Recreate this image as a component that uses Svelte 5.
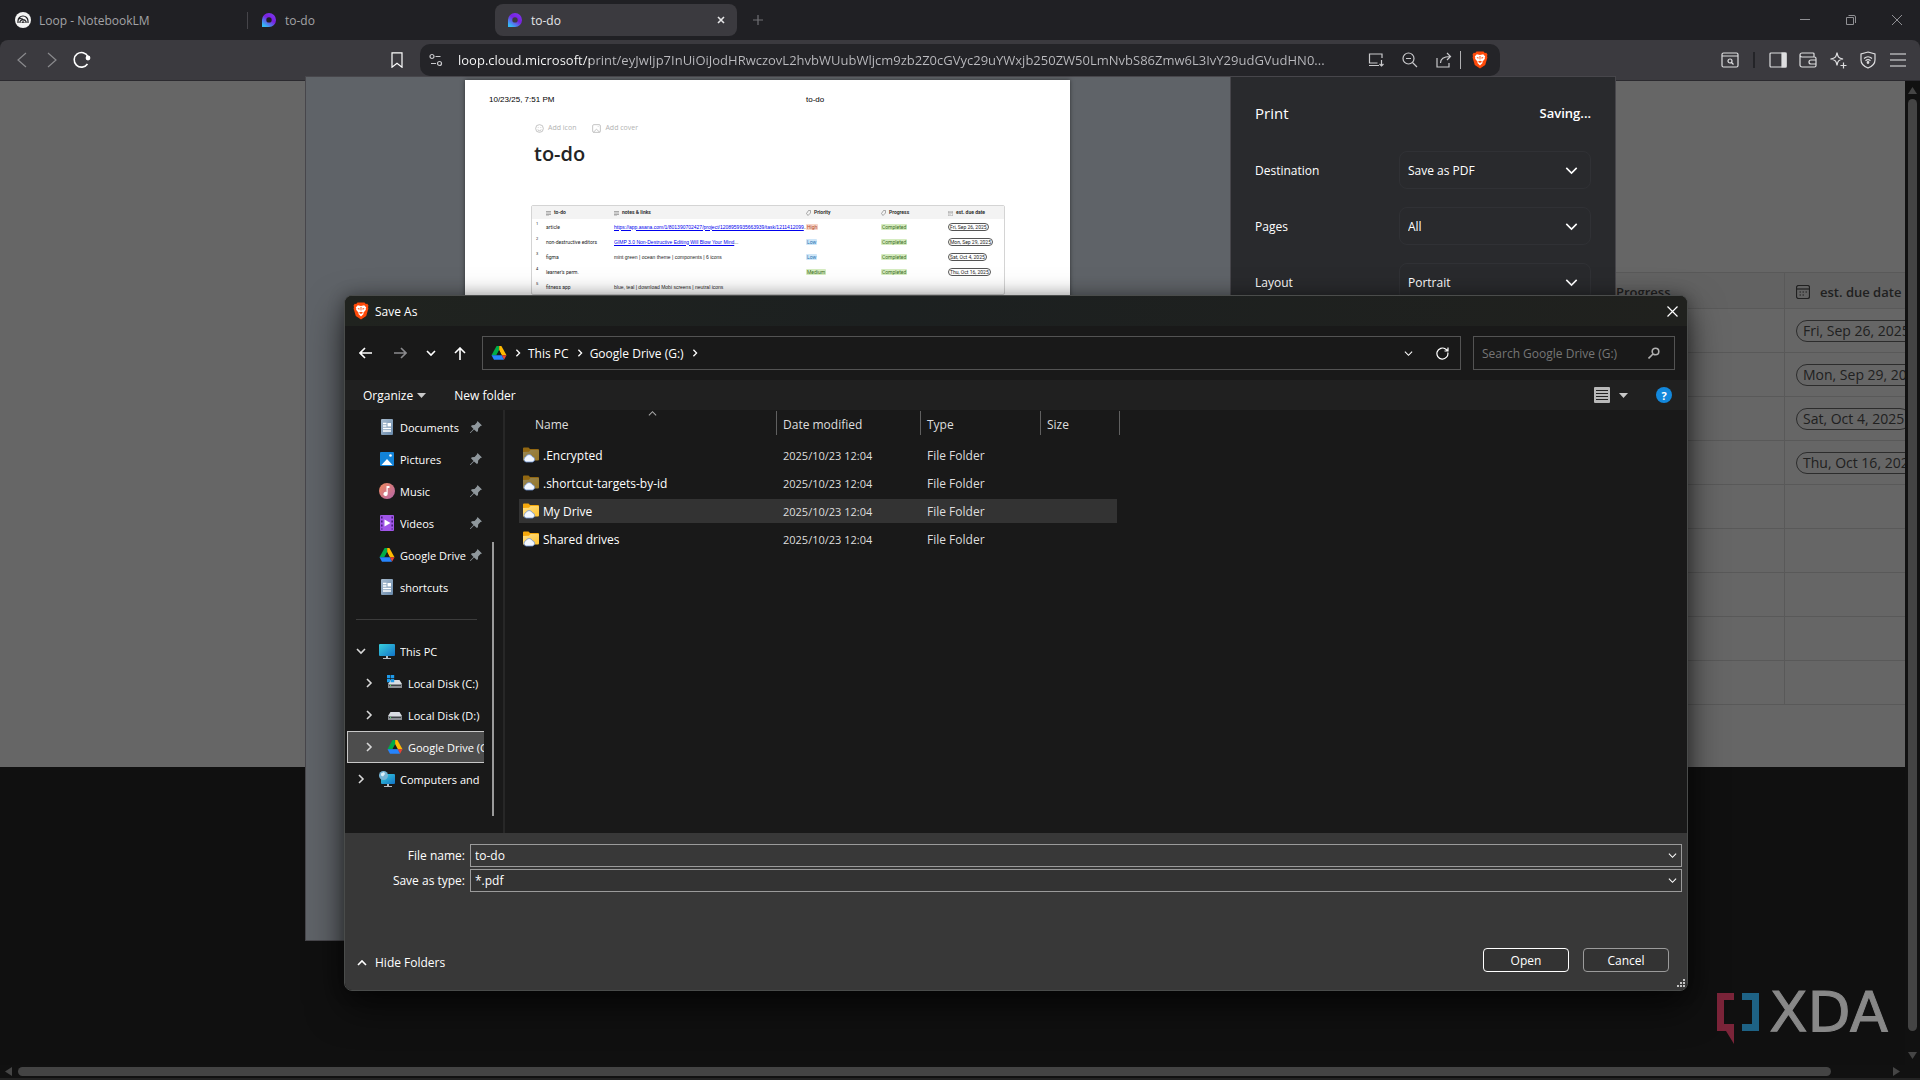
<script lang="ts">
  const host = 'loop.cloud.microsoft';
  const path =
    '/print/eyJwIjp7InUiOiJodHRwczovL2hvbWUubWljcm9zb2Z0cGVyc29uYWxjb250ZW50LmNvbS86Zmw6L3IvY29udGVudHN0...';

  let fileName = $state('to-do');
  let search = $state('');

  const settings = [
    { id: 'destination', label: 'Destination', value: 'Save as PDF' },
    { id: 'pages', label: 'Pages', value: 'All' },
    { id: 'layout', label: 'Layout', value: 'Portrait' }
  ];

  const dueDates = ['Fri, Sep 26, 2025', 'Mon, Sep 29, 2025', 'Sat, Oct 4, 2025', 'Thu, Oct 16, 2025', '', '', '', '', ''];

  const tasks = [
    {
      name: 'article',
      link: 'https://app.asana.com/1/801390702427/project/1208959935663939/task/1211412099',
      priority: 'High',
      progress: 'Completed',
      due: 'Fri, Sep 26, 2025'
    },
    {
      name: 'non-destructive editors',
      link: 'GIMP 3.0 Non-Destructive Editing Will Blow Your Mind',
      priority: 'Low',
      progress: 'Completed',
      due: 'Mon, Sep 29, 2025'
    },
    {
      name: 'figma',
      note: 'mint green | ocean theme | components | 6 icons',
      priority: 'Low',
      progress: 'Completed',
      due: 'Sat, Oct 4, 2025'
    },
    { name: "learner's perm.", priority: 'Medium', progress: 'Completed', due: 'Thu, Oct 16, 2025' },
    { name: 'fitness app', note: 'blue, teal | download Mobi screens | neutral icons' }
  ];

  const quickAccess = [
    { name: 'Documents', icon: 'document', pinned: true },
    { name: 'Pictures', icon: 'pictures', pinned: true },
    { name: 'Music', icon: 'music', pinned: true },
    { name: 'Videos', icon: 'videos', pinned: true },
    { name: 'Google Drive', icon: 'drive', pinned: true },
    { name: 'shortcuts', icon: 'document', pinned: false }
  ];

  const devices = [
    { name: 'This PC', icon: 'pc', open: true },
    { name: 'Local Disk (C:)', icon: 'diskWin', nested: true },
    { name: 'Local Disk (D:)', icon: 'disk', nested: true },
    { name: 'Google Drive (G:)', icon: 'drive', nested: true, selected: true },
    { name: 'Computers and', icon: 'network' }
  ];

  const files = [
    { name: '.Encrypted', hidden: true },
    { name: '.shortcut-targets-by-id', hidden: true },
    { name: 'My Drive', active: true },
    { name: 'Shared drives' }
  ];
</script>

{#snippet chevron(dir: string, size: number)}
  <svg class="line" width={size} height={size} viewBox="0 0 10 10">
    {#if dir === 'down'}
      <path d="M1 3l4 4 4-4" />
    {:else if dir === 'up'}
      <path d="M1 7l4-4 4 4" />
    {:else}
      <path d="M3 1l4 4-4 4" />
    {/if}
  </svg>
{/snippet}

{#snippet brave()}
  <svg width="16" height="18" viewBox="0 0 16 18">
    <path fill="#ff4a0a" d="M4.5.5h7l1.3 1.4 1.5-.2 1.2 2-.5 1.4.4 1.3-2.2 7.6L8 17.6l-5.2-3.6L.6 6.4 1 5.1.5 3.7l1.2-2 1.5.2z" />
    <path fill="#fff" d="M8 4l3.2-.7 2 2.3-.5 1.2.2.9-2.5 3 .1 1.2L8 14.4 5.5 11.9l.1-1.2-2.5-3 .2-.9-.5-1.2 2-2.3z" />
    <path fill="#ff4a0a" d="M4.5 6l2.2.5-.6 1.6zM11.5 6l-2.2.5.6 1.6zM7.5 5h1l-.1 3.6h-.8zM5.8 10.7L8 9.8l2.2.9L8 12z" />
  </svg>
{/snippet}

{#snippet loopLogo()}
  <svg width="14" height="14" viewBox="0 0 14 14">
    <path fill="url(#loop)" fill-rule="evenodd" d="M0 14V7a7 7 0 1 1 7 7zM7 4.2A2.7 2.7 0 1 0 7 9.6 2.7 2.7 0 0 0 7 4.2z" />
  </svg>
{/snippet}

{#snippet icon(name: string)}
  <svg class="ico" width="16" height="16" viewBox="0 0 16 16">
    {#if name === 'document'}
      <rect x="2" y="0" width="12" height="16" rx="1" fill="url(#doc)" />
      <path stroke="#fff" stroke-width="1.3" d="M4 4.5h3.5M4 7h3.5M4 9.5h8M4 12h8" />
      <rect x="8.5" y="4" width="3.5" height="3.5" fill="#fff" />
    {:else if name === 'pictures'}
      <rect x="1" y="1" width="14" height="14" rx="1" fill="#1283d8" />
      <path fill="#fff" d="M2.5 14L8 8l5.5 6z" />
      <circle cx="11.5" cy="4.5" r="1.3" fill="#fff" />
    {:else if name === 'music'}
      <circle cx="8" cy="8" r="8" fill="url(#music)" />
      <path fill="#fff" d="M7.5 3h3v2H8.700v6a2.100 2 0 1 1-1.200-1.900z" />
    {:else if name === 'videos'}
      <rect x="1" y="0" width="14" height="16" rx="1" fill="#a055e8" />
      <path stroke="#46207c" stroke-width="1.6" stroke-dasharray="2 2" d="M2.8 1.5v13M13.2 1.5v13" />
      <path fill="#fff" d="M5.500 4.500l6 3.500-6 3.500z" />
    {:else if name === 'drive'}
      <path fill="#00ac47" d="M5.6 1h2.600v4L5.300 10.200H.5z" />
      <path fill="#ffba00" d="M8.2 1h2.200l5.100 9.200h-4.800L8.200 5z" />
      <path fill="#ea4335" d="M10.700 10.200h4.800L13 14.800z" />
      <path fill="#2684fc" d="M.5 10.200h10.200l2.300 4.600H3z" />
      <path fill="#191919" d="M8.100 5.600l2.500 4.400h-5z" />
    {:else if name === 'pc'}
      <rect x="0" y="1" width="16" height="12" rx="1" fill="url(#screen)" />
      <path fill="#b8bec4" d="M7 13h2v2h3v1H4v-1h3z" />
    {:else if name === 'network'}
      <rect x="2" y="3" width="14" height="10" rx="1" fill="url(#screen)" />
      <path fill="#b8bec4" d="M8 13h2v2h3v1H5v-1h3z" />
      <circle cx="4.5" cy="4.5" r="4.5" fill="#76b5d6" />
      <path fill="#d9eef8" d="M2 2.500l3-1.500 1 2-2 2.500-2-1z" />
    {:else}
      <path fill="#d9dde2" d="M3.500 5h9L15 9H1z" />
      <rect x="1" y="9" width="14" height="4" rx=".5" fill="#8b8f94" />
      <path stroke="#3f4347" d="M2 10.500h12" />
      <rect x="3" y="10" width="1" height="1" fill="#4be05d" />
      {#if name === 'diskWin'}
        <path fill="#1e9bea" d="M0 0h3.300v3.300H0zM3.900 0h3.300v3.300H3.900zM0 3.900h3.300v3.300H0zM3.900 3.900h3.300v3.300H3.900z" />
      {/if}
    {/if}
  </svg>
{/snippet}

{#snippet tag()}
  <svg class="thin" width="5" height="6" viewBox="0 0 10 12"><path d="M1 7l4-6h4v5l-5 5z" /></svg>
{/snippet}

{#snippet lines()}
  <svg class="thin" width="5" height="5" viewBox="0 0 10 10"><path d="M0 1h10M0 4h10M0 7h10M0 10h6" /></svg>
{/snippet}

{#snippet calendar(size: number)}
  <svg class="thin" width={size} height={size} viewBox="0 0 14 14">
    <rect x=".5" y=".5" width="13" height="13" rx="2" />
    <path d="M1 4h12" />
    <path stroke-dasharray="1.5 1.5" d="M3.500 7h8M3.500 10h5" />
  </svg>
{/snippet}

<svg class="defs" width="0" height="0" aria-hidden="true">
  <defs>
    <linearGradient id="loop" x1="1" y1="0" x2="0.3" y2="1">
      <stop offset="0" stop-color="#7a3ff0" />
      <stop offset=".5" stop-color="#7a1fe0" />
      <stop offset="1" stop-color="#35b8f5" />
    </linearGradient>
    <linearGradient id="doc" x1="0" y1="0" x2="1" y2="1">
      <stop offset="0" stop-color="#a9bccf" />
      <stop offset="1" stop-color="#6889aa" />
    </linearGradient>
    <linearGradient id="music" x1="0" y1="0" x2="1" y2="1">
      <stop offset="0" stop-color="#f08a5c" />
      <stop offset="1" stop-color="#b364a8" />
    </linearGradient>
    <linearGradient id="screen" x1="0" y1="0" x2="1" y2="1">
      <stop offset="0" stop-color="#38d0dc" />
      <stop offset="1" stop-color="#1273c8" />
    </linearGradient>
    <linearGradient id="folder" x1="0" y1="0" x2="1" y2="1">
      <stop offset="0" stop-color="#ffe08a" />
      <stop offset="1" stop-color="#ffc32e" />
    </linearGradient>
  </defs>
</svg>

<div class="browser">
  <header class="tabs">
    <button class="tab first">
      <svg width="16" height="16" viewBox="0 0 16 16">
        <circle cx="8" cy="8" r="8" fill="#f4f4f4" />
        <path fill="none" stroke="#202024" stroke-width="1.2" d="M3 11V9a5 5 0 0 1 10 0v2M5 11V9.500a3.300 3.300 0 0 1 6 0V11M7.200 11v-.8a1 1 0 0 1 1.700 0v.8M3.500 7A4.500 4.500 0 0 1 9 8.500" />
      </svg>
      <span>Loop - NotebookLM</span>
    </button>
    <button class="tab">{@render loopLogo()}<span>to-do</span></button>
    <button class="tab active">
      {@render loopLogo()}<span>to-do</span>
      <svg class="line bold" width="8" height="8" viewBox="0 0 8 8"><path d="M1 1l6 6M7 1L1 7" /></svg>
    </button>
    <button class="new-tab" aria-label="New tab">
      <svg class="line" width="10" height="10" viewBox="0 0 10 10"><path d="M5 0v10M0 5h10" /></svg>
    </button>
    <div class="window-buttons">
      <button aria-label="Minimize"><svg class="line" width="10" height="10" viewBox="0 0 10 10"><path d="M0 4.500h10" /></svg></button>
      <button aria-label="Restore">
        <svg class="line" width="10" height="10" viewBox="0 0 10 10"><path d="M.5 2.500h7v7h-7zM2.500.5H8A1.500 1.500 0 0 1 9.500 2v6" /></svg>
      </button>
      <button aria-label="Close"><svg class="line" width="10" height="10" viewBox="0 0 10 10"><path d="M0 0l10 10M10 0L0 10" /></svg></button>
    </div>
  </header>

  <div class="toolbar">
    <div class="nav">
      <button class="dim" aria-label="Back"><svg class="line" width="10" height="16" viewBox="0 0 10 16"><path d="M9 1L1 8l8 7" /></svg></button>
      <button class="dim" aria-label="Forward"><svg class="line" width="10" height="16" viewBox="0 0 10 16"><path d="M1 1l8 7-8 7" /></svg></button>
      <button aria-label="Reload">
        <svg class="line bold" width="18" height="18" viewBox="0 0 18 18"><path d="M14.500 13A7.300 7.300 0 1 1 15 5.500" /><circle cx="15" cy="7" r="1.6" fill="currentColor" /></svg>
      </button>
      <button class="bookmark" aria-label="Bookmark">
        <svg class="line" width="12" height="16" viewBox="0 0 12 16"><path d="M1 .8h10v14.400l-5-4-5 4z" /></svg>
      </button>
    </div>
    <div class="omnibox">
      <svg class="line" width="14" height="14" viewBox="0 0 14 14"><circle cx="3" cy="3.5" r="2" /><path d="M6.500 3.500h5M2 10.500h5" /><circle cx="10.5" cy="10.5" r="2" /></svg>
      <input class="url" aria-label="Address" value={host + path} readonly />
      <svg class="line" width="16" height="14" viewBox="0 0 16 14"><path d="M14 5V1H1.500v9h8M1 12.500h10M13.500 7v6M11.500 11l2 2 2-2" /></svg>
      <svg class="line" width="16" height="16" viewBox="0 0 16 16"><circle cx="6.5" cy="6.5" r="5.5" /><path d="M10.500 10.500L15 15M4 6.500h5" /></svg>
      <svg class="line" width="16" height="16" viewBox="0 0 16 16"><path d="M1 6v9h12v-4M4.500 11c0-4 3-6.500 9.500-6.500M11 1l3.500 3.500L11 8" /></svg>
      <div class="brave-button">{@render brave()}</div>
    </div>
    <div class="extras">
      <svg class="line" width="18" height="16" viewBox="0 0 18 16"><rect x="1" y="1" width="16" height="14" rx="1.5" /><path d="M1 4h16M10.500 10.500l2 2" /><circle cx="9" cy="9" r="2" /></svg>
      <i></i>
      <svg class="line" width="18" height="16" viewBox="0 0 18 16"><rect x="1" y="1" width="16" height="14" rx="1" /><path fill="currentColor" d="M13 1h4v14h-4z" /></svg>
      <svg class="line" width="18" height="16" viewBox="0 0 18 16"><path d="M15 5V2a1 1 0 0 0-1-1H3a2 2 0 0 0 0 4h12.500A1.500 1.500 0 0 1 17 6.500v7a1.500 1.500 0 0 1-1.500 1.500H3a2 2 0 0 1-2-2V3M17 8h-5a2 2 0 0 0 0 4h5" /></svg>
      <svg class="line" width="18" height="18" viewBox="0 0 18 18"><path d="M8 1.500c.8 4.500 1.500 5.500 6 6.500-4.500 1-5.200 2-6 6.500C7.200 10 6.500 9 1.500 8 6.500 7 7.200 6 8 1.500zM14.500 11.500v6M11.500 14.500h6" /></svg>
      <svg class="line" width="18" height="18" viewBox="0 0 18 18"><path d="M9 1l7 2v6c0 4-3 6.500-7 8-4-1.500-7-4-7-8V3zM5 7.500q4-3.500 8 0M6.500 9.700q2.500-2 5 0" /><circle cx="9" cy="11.5" r=".8" fill="currentColor" /></svg>
      <svg class="line bold menu" width="18" height="14" viewBox="0 0 18 14"><path d="M1 1h16M1 7h16M1 13h16" /></svg>
    </div>
  </div>

  <main>
    <div class="content">
      <div class="page">
        <table class="page-table">
          <thead>
            <tr><th class="progress">Progress</th><th><span class="due-head">{@render calendar(14)}est. due date</span></th></tr>
          </thead>
          <tbody>
            {#each dueDates as due}
              <tr><td></td><td>{#if due}<span class="due">{due}</span>{/if}</td></tr>
            {/each}
          </tbody>
        </table>
      </div>
      <div class="watermark">
        <svg width="44" height="54" viewBox="0 0 44 54">
          <path fill="#7b2439" d="M1 1h17v7H8v24h10v20l-8-13H1z" />
          <path fill="#1e6285" d="M26 1h17v38H26v-7h10V8H26z" />
        </svg>
        <span>XDA</span>
      </div>
    </div>
    <div class="scroll-y"><svg width="9" height="7" viewBox="0 0 9 7"><path d="M4.500 0L9 7H0z" /></svg><i></i><svg width="9" height="7" viewBox="0 0 9 7"><path d="M4.500 7L9 0H0z" /></svg></div>
  </main>
  <div class="scroll-x"><svg width="7" height="9" viewBox="0 0 7 9"><path d="M0 4.500L7 0v9z" /></svg><i></i><svg width="7" height="9" viewBox="0 0 7 9"><path d="M7 4.500L0 0v9z" /></svg></div>

  <section class="print-dialog" aria-label="Print">
    <div class="preview">
      <article class="paper">
        <div class="stamp"><span>10/23/25, 7:51 PM</span><span>to-do</span></div>
        <div class="paper-actions">
          <span><svg class="thin" width="9" height="9" viewBox="0 0 14 14"><circle cx="7" cy="7" r="6" /><path d="M5 5v1M9 5v1M4 9q3 3 6 0" /></svg>Add icon</span>
          <span><svg class="thin" width="9" height="9" viewBox="0 0 14 14"><rect x="1" y="1" width="12" height="12" rx="2" /><path d="M2 13l5-5 5 5M9 4h1" /></svg>Add cover</span>
        </div>
        <h1>to-do</h1>
        <div class="tasks-frame">
          <table class="tasks">
            <colgroup><col class="c-num" /><col class="c-name" /><col class="c-note" /><col class="c-pri" /><col class="c-prog" /><col /></colgroup>
            <thead>
              <tr>
                <th></th>
                <th>{@render lines()}to-do</th>
                <th>{@render lines()}notes &amp; links</th>
                <th>{@render tag()}Priority</th>
                <th>{@render tag()}Progress</th>
                <th>{@render calendar(5)}est. due date</th>
              </tr>
            </thead>
            <tbody>
              {#each tasks as task, i}
                <tr>
                  <td class="num">{i + 1}</td>
                  <td>{task.name}</td>
                  <td class="note">{#if task.link}<a href="#task">{task.link}</a>...{:else}{task.note ?? ''}{/if}</td>
                  <td>{#if task.priority}<span class="chip {task.priority.toLowerCase()}">{task.priority}</span>{/if}</td>
                  <td>{#if task.progress}<span class="chip done">{task.progress}</span>{/if}</td>
                  <td>{#if task.due}<span class="date">{task.due}</span>{/if}</td>
                </tr>
              {/each}
            </tbody>
          </table>
        </div>
      </article>
    </div>
    <div class="settings">
      <div class="settings-head"><h2>Print</h2><strong>Saving...</strong></div>
      {#each settings as item}
        <div class="setting">
          <label for={item.id}>{item.label}</label>
          <div class="select">
            <select id={item.id}><option>{item.value}</option></select>
            {@render chevron('down', 13)}
          </div>
        </div>
      {/each}
    </div>
  </section>

  <section class="save-dialog" aria-label="Save As">
    <div class="title">
      {@render brave()}<span>Save As</span>
      <button aria-label="Close dialog"><svg class="line" width="11" height="11" viewBox="0 0 11 11"><path d="M.5.5l10 10M10.500.5l-10 10" /></svg></button>
    </div>

    <div class="location">
      <button aria-label="Back"><svg class="line bold" width="13" height="12" viewBox="0 0 13 12"><path d="M13 6H1M6 1L1 6l5 5" /></svg></button>
      <button class="dim" aria-label="Forward"><svg class="line bold" width="13" height="12" viewBox="0 0 13 12"><path d="M0 6h12M7 1l5 5-5 5" /></svg></button>
      <button class="narrow bold" aria-label="Recent locations">{@render chevron('down', 10)}</button>
      <button class="up" aria-label="Up"><svg class="line bold" width="12" height="13" viewBox="0 0 12 13"><path d="M6 13V1M1 6l5-5 5 5" /></svg></button>
      <div class="address">
        {@render icon('drive')}
        <span class="sep bold">{@render chevron('right', 8)}</span>
        <button>This PC</button>
        <span class="sep bold">{@render chevron('right', 8)}</span>
        <button>Google Drive (G:)</button>
        <span class="sep bold">{@render chevron('right', 8)}</span>
        <button class="push" aria-label="Previous locations">{@render chevron('down', 9)}</button>
        <button class="refresh" aria-label="Refresh">
          <svg class="line" width="13" height="13" viewBox="0 0 13 13"><path d="M11.800 5.500A5.500 5.500 0 1 1 9.500 2L11.500 3.500M12 .5v3.500H8.500" /></svg>
        </button>
      </div>
      <div class="search">
        <input aria-label="Search" placeholder="Search Google Drive (G:)" bind:value={search} />
        <svg class="line bold" width="12" height="12" viewBox="0 0 12 12"><circle cx="7.5" cy="4.5" r="3.3" /><path d="M5 7l-4.500 4.500" /></svg>
      </div>
    </div>

    <div class="commands">
      <button>Organize <svg width="9" height="5" viewBox="0 0 9 5"><path fill="#c8c8c8" d="M0 0h9L4.500 5z" /></svg></button>
      <button>New folder</button>
      <button class="view" aria-label="View">
        <svg width="16" height="16" viewBox="0 0 16 16"><rect width="16" height="16" rx="1" fill="#b9b9b9" /><path stroke="#222" d="M2 3.500h12M2 6.500h12M2 9.500h12M2 12.500h12" /></svg>
        <svg width="9" height="5" viewBox="0 0 9 5"><path fill="#c8c8c8" d="M0 0h9L4.500 5z" /></svg>
      </button>
      <button class="help" aria-label="Help">?</button>
    </div>

    <div class="body">
      <nav class="tree">
        <ul>
          {#each quickAccess as item}
            <li>
              <span class="twist"></span>{@render icon(item.icon)}<span class="label">{item.name}</span>
              {#if item.pinned}
                <svg class="pin" width="12" height="12" viewBox="0 0 12 12"><path fill="#8f979c" d="M7.500 0L12 4.500l-1.500.6-2.300 2.400-.3 2.700-1 .8L4 8.500.5 12H0v-.5L3.500 8 1 5.200l.8-1 2.800-.3L6.900 1.500z" /></svg>
              {/if}
            </li>
          {/each}
          <li class="rule"></li>
          {#each devices as item}
            <li class:nested={item.nested} class:selected={item.selected}>
              <span class="twist bold">{@render chevron(item.open ? 'down' : 'right', 10)}</span>{@render icon(item.icon)}<span class="label">{item.name}</span>
            </li>
          {/each}
        </ul>
        <div class="tree-scroll"></div>
      </nav>

      <div class="list">
        <table class="files">
          <colgroup><col class="f-name" /><col class="f-date" /><col class="f-type" /><col class="f-size" /></colgroup>
          <thead>
            <tr>
              <th>Name<span class="sort">{@render chevron('up', 9)}</span></th>
              <th>Date modified</th>
              <th>Type</th>
              <th>Size</th>
            </tr>
          </thead>
          <tbody>
            {#each files as file}
              <tr class:active={file.active}>
                <td>
                  <div class="file">
                    <svg width="16" height="16" viewBox="0 0 16 16">
                      <g opacity={file.hidden ? 0.55 : 1}>
                        <path fill="#f5a80c" d="M0 1.500A1 1 0 0 1 1 .5h4.500L7 2h8a1 1 0 0 1 1 1v4H0z" />
                        <path fill="url(#folder)" d="M0 5l6-.2L7.500 3H15a1 1 0 0 1 1 1v8.500a1 1 0 0 1-1 1H0z" />
                      </g>
                      <path fill="#f3f8ff" stroke="#6e92cf" stroke-width=".8" d="M3 15a2.800 2.800 0 0 1-.2-5.300 3.600 3.600 0 0 1 6.600 0A2.700 2.700 0 0 1 9.500 15z" />
                    </svg>
                    <span>{file.name}</span>
                  </div>
                </td>
                <td class="when">2025/10/23 12:04</td>
                <td>File Folder</td>
                <td></td>
              </tr>
            {/each}
          </tbody>
        </table>
      </div>
    </div>

    <footer>
      <div class="field">
        <label for="file-name">File name:</label>
        <div class="combo"><input id="file-name" bind:value={fileName} />{@render chevron('down', 9)}</div>
      </div>
      <div class="field">
        <label for="file-type">Save as type:</label>
        <div class="combo dark"><select id="file-type"><option>*.pdf</option></select>{@render chevron('down', 9)}</div>
      </div>
      <div class="actions">
        <button class="hide bold">{@render chevron('up', 10)}Hide Folders</button>
        <button class="push primary">Open</button>
        <button class="secondary">Cancel</button>
      </div>
      <svg class="grip" width="8" height="8" viewBox="0 0 8 8"><path fill="#c4c4c4" d="M6 0h2v2H6zM3 3h2v2H3zM6 3h2v2H6zM0 6h2v2H0zM3 6h2v2H3zM6 6h2v2H6z" /></svg>
    </footer>
  </section>
</div>

<style>
  :global(body) {
    margin: 0;
    background: #101010;
  }

  .browser {
    position: relative;
    display: flex;
    flex-direction: column;
    height: 100vh;
    overflow: hidden;
    background: #202024;
    color: #fff;
    font-family: 'Open Sans', 'Noto Sans', sans-serif;
    font-size: 12px;
  }

  .browser * {
    box-sizing: border-box;
  }

  .defs {
    position: absolute;
  }

  button,
  input,
  select {
    margin: 0;
    padding: 0;
    border: 0;
    background: none;
    color: inherit;
    font: inherit;
    outline: 0;
  }

  select {
    appearance: none;
  }

  svg {
    display: block;
    flex: none;
  }

  .line,
  .thin {
    fill: none;
    stroke: currentColor;
    stroke-width: 1.2;
  }

  .bold,
  .bold .line {
    stroke-width: 1.6;
  }

  .push {
    margin-left: auto;
  }

  /* Tab strip */
  .tabs {
    display: flex;
    align-items: center;
    height: 40px;
    flex: none;
    color: #a3a3a6;
  }

  .tab {
    display: flex;
    align-items: center;
    gap: 9px;
    width: 247px;
    height: 32px;
    padding: 0 14px;
    text-align: left;
  }

  .tab.first {
    width: 248px;
    gap: 8px;
    padding-left: 15px;
    background: linear-gradient(#46454a, #46454a) right center / 1px 17px no-repeat;
  }

  .tab.active {
    width: 242px;
    padding: 0 12px 0 13px;
    border-radius: 8px;
    background: #3b3a3f;
    color: #e6e6e8;
  }

  .tab.active span {
    flex: 1;
  }

  .new-tab {
    display: flex;
    margin-left: 16px;
    color: #707074;
  }

  .window-buttons {
    display: flex;
    margin-left: auto;
    color: #909094;
  }

  .window-buttons button {
    display: flex;
    justify-content: center;
    width: 46px;
  }

  .window-buttons .line {
    stroke-width: 1;
  }

  /* Toolbar */
  .toolbar {
    display: grid;
    grid-template-columns: 420px 1fr 420px;
    align-items: center;
    height: 41px;
    flex: none;
    padding-bottom: 1px;
    border-bottom: 1px solid #2b2a2f;
    border-radius: 8px 8px 0 0;
    background: #3b3a3f;
  }

  .nav {
    display: flex;
    align-items: center;
    padding: 0 8px 0 7px;
  }

  .nav button {
    display: flex;
    justify-content: center;
    width: 30px;
  }

  .nav .bookmark {
    margin-left: auto;
  }

  .dim {
    color: #8a8a8d;
  }

  .omnibox {
    display: flex;
    align-items: center;
    gap: 18px;
    height: 32px;
    padding: 0 12px 0 9px;
    border-radius: 10px;
    background: #242428;
    color: #c9c9cc;
  }

  /* The host reads brighter than the rest of the address */
  .url {
    flex: 1;
    min-width: 0;
    margin-left: -3px;
    background: linear-gradient(90deg, #fff 132px, #bcbcc0 132px);
    background-clip: text;
    color: transparent;
    font-size: 13px;
  }

  .brave-button {
    margin-left: -10px;
    padding-left: 11px;
    border-left: 1px solid #b0b0b2;
  }

  .extras {
    display: flex;
    align-items: center;
    justify-content: flex-end;
    gap: 12px;
    padding-right: 13px;
    color: #dedee0;
  }

  .extras i {
    width: 2px;
    height: 16px;
    margin: 0 2px;
    background: #242428;
  }

  .extras .menu {
    color: #b0b0b2;
  }

  /* Dimmed page behind the dialogs */
  main {
    display: flex;
    flex: 1;
    min-height: 0;
  }

  .content {
    display: flex;
    flex: 1;
    min-width: 0;
    flex-direction: column;
    align-items: flex-end;
    overflow: hidden;
    background: #101010;
  }

  .page {
    display: flex;
    flex: none;
    justify-content: flex-end;
    width: 100%;
    height: 686px;
    padding-top: 191px;
    background: #666;
    color: #202020;
    font-size: 13px;
  }

  .page-table {
    width: 330px;
    height: 100px;
    border-collapse: collapse;
    table-layout: fixed;
    white-space: nowrap;
  }

  .page-table th,
  .page-table td {
    height: 44px;
    padding: 0 11px;
    overflow: hidden;
    border: 1px solid #595959;
    text-align: left;
  }

  .page-table th {
    height: 36px;
    padding-top: 2px;
    background: #626262;
    font-weight: 600;
  }

  .page-table .progress {
    width: 209px;
    padding-left: 40px;
  }

  .page-table td:last-child,
  .page-table th:last-child {
    padding-right: 0;
    border-right: 0;
  }

  .due-head {
    display: flex;
    align-items: center;
    gap: 10px;
  }

  .due {
    display: inline-block;
    padding: 0 6px;
    border: 1px solid #2c2c2c;
    border-radius: 11px;
    line-height: 20px;
    font-size: 14px;
  }

  .watermark {
    display: flex;
    align-items: flex-start;
    gap: 9px;
    height: 73px;
    margin-top: auto;
    margin-right: 17px;
    color: #888;
    font: 400 56px/40px 'DejaVu Sans', sans-serif;
    -webkit-text-stroke: 1px #888;
  }

  .scroll-y,
  .scroll-x {
    display: flex;
    flex: none;
    align-items: center;
    background: #111;
    fill: #454545;
  }

  .scroll-y {
    flex-direction: column;
    width: 15px;
    padding: 6px 0;
    gap: 5px;
  }

  .scroll-y i {
    flex: 1;
    width: 9px;
    margin-bottom: 16px;
    border-radius: 5px;
    background: #444;
  }

  .scroll-x {
    height: 15px;
    padding: 0 20px 0 5px;
    gap: 6px;
    border-bottom: 2px solid #232323;
  }

  .scroll-x i {
    flex: 1;
    height: 9px;
    margin-right: 56px;
    border-radius: 5px;
    background: #444;
  }

  /* Print dialog */
  .print-dialog {
    position: absolute;
    top: 76px;
    right: 304px;
    bottom: 139px;
    left: 305px;
    display: flex;
    border: 1px solid #47464b;
    background: #5f6368;
  }

  .preview {
    display: flex;
    flex: 1;
    justify-content: center;
    padding: 3px 1px 0 0;
  }

  .paper {
    width: 605px;
    padding: 16px 24px;
    background: #fff;
    box-shadow: 0 0 4px rgba(0, 0, 0, 0.5);
    color: #242424;
  }

  .stamp {
    display: grid;
    grid-template-columns: 317px 1fr;
    color: #000;
    font: 8px/8px 'Liberation Sans', Arial, sans-serif;
  }

  .paper-actions {
    display: flex;
    gap: 16px;
    margin: 18px 0 0 46px;
    color: #b3b3b3;
    font-size: 7px;
    line-height: 12px;
  }

  .paper-actions span {
    display: flex;
    align-items: center;
    gap: 4px;
  }

  h1 {
    margin: 6px 0 37px 45px;
    font-size: 20px;
    font-weight: 600;
    line-height: 28px;
  }

  .tasks-frame {
    width: 474px;
    margin-left: 42px;
    border: 1px solid #d4d4d4;
    border-radius: 2px;
  }

  .tasks {
    width: 100%;
    border-collapse: collapse;
    table-layout: fixed;
    font-family: Roboto, sans-serif;
    font-size: 5px;
    line-height: 6px;
    white-space: nowrap;
  }

  .tasks th {
    height: 13px;
    padding: 0;
    background: #f3f3f3;
    font-weight: 600;
    text-align: left;
  }

  .tasks th svg {
    display: inline-block;
    margin-right: 3px;
    color: #777;
    vertical-align: middle;
  }

  .tasks td {
    height: 15px;
    padding: 0;
  }

  .tasks td.num {
    padding: 0 0 5px 4px;
    font-size: 4px;
  }

  .tasks .note {
    font-family: 'Liberation Sans', Arial, sans-serif;
  }

  .tasks a {
    color: #0000ee;
  }

  .c-num {
    width: 14px;
  }

  .c-name {
    width: 68px;
  }

  .c-note {
    width: 192px;
  }

  .c-pri {
    width: 75px;
  }

  .c-prog {
    width: 67px;
  }

  .chip {
    padding: 0 1px;
    border-radius: 1px;
  }

  .chip.high {
    background: #f7d5c8;
    color: #b0452a;
  }

  .chip.low {
    background: #cfe6f8;
    color: #2272b0;
  }

  .chip.medium,
  .chip.done {
    background: #d5ecc0;
    color: #3d6e22;
  }

  .date {
    padding: 0 1px;
    border: 1px solid #555;
    border-radius: 4px;
  }

  .settings {
    width: 385px;
    padding: 16px 24px;
    border-left: 1px solid #47464b;
    background: #292a2d;
    font-size: 12px;
  }

  .settings-head {
    display: flex;
    align-items: center;
    justify-content: space-between;
    height: 40px;
    margin-bottom: 18px;
  }

  h2 {
    margin: 0;
    font-size: 15px;
    font-weight: 400;
  }

  .settings-head strong {
    font-weight: 600;
    font-size: 13px;
  }

  .setting {
    display: flex;
    align-items: center;
    justify-content: space-between;
    height: 38px;
    margin-bottom: 18px;
  }

  .select {
    display: flex;
    align-items: center;
    width: 192px;
    height: 38px;
    border: 1px solid #303135;
    border-radius: 8px;
  }

  .select select {
    flex: 1;
    height: 100%;
    padding-left: 8px;
  }

  .select svg {
    margin-right: 12px;
    margin-left: -25px;
    pointer-events: none;
  }

  /* Save As dialog */
  .save-dialog {
    position: absolute;
    top: 295px;
    right: 232px;
    bottom: 89px;
    left: 344px;
    display: flex;
    flex-direction: column;
    overflow: hidden;
    border: 1px solid #4a4c4b;
    border-radius: 8px;
    background: #191919;
    box-shadow: 0 16px 36px rgba(0, 0, 0, 0.6), 0 0 16px rgba(0, 0, 0, 0.3);
  }

  .title {
    display: flex;
    align-items: center;
    gap: 6px;
    height: 30px;
    flex: none;
    padding: 0 9px 0 8px;
    background: linear-gradient(90deg, #20231f, #1c2020 40%, #20211e);
  }

  .title button {
    margin-left: auto;
  }

  .location {
    display: flex;
    align-items: center;
    height: 54px;
    flex: none;
    padding: 0 12px 0 3px;
  }

  .location > button {
    display: flex;
    justify-content: center;
    width: 35px;
  }

  .location > .narrow {
    width: 25px;
  }

  .location > .up {
    width: 33px;
    margin-right: 6px;
  }

  .address {
    display: flex;
    flex: 1;
    align-items: center;
    height: 34px;
    margin-right: 12px;
    padding: 0 11px 0 8px;
    border: 1px solid #535353;
  }

  .sep {
    padding: 0 6px 0 7px;
  }

  .address .refresh {
    margin-left: 23px;
  }

  .search {
    display: flex;
    align-items: center;
    width: 202px;
    height: 34px;
    padding: 0 14px 0 8px;
    border: 1px solid #535353;
    color: #b0b0b0;
  }

  .search input {
    flex: 1;
    min-width: 0;
    color: #fff;
  }

  .search input::placeholder {
    color: #767676;
    opacity: 1;
  }

  .commands {
    display: flex;
    align-items: center;
    height: 30px;
    flex: none;
    padding: 0 15px 0 18px;
    background: #202020;
  }

  .commands button {
    display: flex;
    align-items: center;
    gap: 4px;
    margin-right: 28px;
  }

  .commands .view {
    gap: 9px;
    margin-left: auto;
  }

  .commands .help {
    justify-content: center;
    width: 16px;
    height: 16px;
    margin: 0;
    border-radius: 50%;
    background: #1388dc;
    font-size: 11px;
    font-weight: 700;
  }

  .body {
    display: flex;
    flex: 1;
    min-height: 0;
  }

  .tree {
    display: flex;
    width: 160px;
    flex: none;
    padding-left: 2px;
    border-right: 2px solid #272727;
    font-size: 11px;
  }

  .tree ul {
    flex: 1;
    min-width: 0;
    margin: 0;
    padding: 1px 0 0;
    list-style: none;
  }

  .tree li {
    display: flex;
    align-items: center;
    height: 32px;
    padding-left: 9px;
    white-space: nowrap;
    overflow: hidden;
  }

  .tree li.nested {
    padding-left: 17px;
  }

  .tree li.selected {
    padding-left: 16px;
    border: 1px solid #c8c8c8;
    border-right: 0;
    background: #4d4d4d;
  }

  .tree li.rule::before {
    content: '';
    width: 121px;
    border-top: 1px solid #3c3c3c;
  }

  .twist {
    width: 23px;
    flex: none;
    color: #d8d8d8;
  }

  .label {
    flex: 1;
    min-width: 0;
    margin-left: 5px;
    overflow: hidden;
  }

  .pin {
    margin-right: 2px;
  }

  .tree-scroll {
    width: 2px;
    margin: 132px 9px 17px 8px;
    background: #9a9a9a;
  }

  .list {
    flex: 1;
    padding-left: 14px;
  }

  .files {
    width: 601px;
    border-spacing: 0;
    table-layout: fixed;
  }

  .f-name {
    width: 258px;
  }

  .f-date {
    width: 144px;
  }

  .f-type {
    width: 120px;
  }

  .files th {
    position: relative;
    height: 31px;
    padding: 0 0 2px 6px;
    background: linear-gradient(#606060, #606060) right 1px / 1px 24px no-repeat;
    color: #dedede;
    font-weight: 400;
    text-align: left;
  }

  .files th:first-child {
    padding-left: 16px;
  }

  .sort {
    position: absolute;
    top: -1px;
    left: 50%;
    color: #a8a8a8;
  }

  .files td {
    height: 28px;
    padding: 0 0 0 6px;
    border: 2px solid transparent;
    border-width: 2px 0;
    background-clip: padding-box;
    color: #dedede;
  }

  .files td:first-child {
    padding-left: 4px;
    color: #fff;
  }

  .files td:last-child {
    border-right-width: 3px;
  }

  .files .when {
    font-size: 11px;
  }

  .files .active td {
    background-color: #333;
  }

  .file {
    display: flex;
    align-items: center;
    gap: 4px;
  }

  footer {
    position: relative;
    flex: none;
    height: 157px;
    padding: 11px 5px 0 0;
    background: #383838;
  }

  .field {
    display: flex;
    align-items: center;
    margin-bottom: 2px;
  }

  .field label {
    width: 120px;
    margin-right: 5px;
    text-align: right;
  }

  .combo {
    display: flex;
    flex: 1;
    align-items: center;
    height: 23px;
    padding-right: 4px;
    border: 1px solid #9b9b9b;
  }

  .combo.dark {
    background: #333;
  }

  .combo input,
  .combo select {
    flex: 1;
    height: 100%;
    padding-left: 4px;
  }

  .combo svg {
    pointer-events: none;
  }

  .actions {
    display: flex;
    align-items: center;
    gap: 14px;
    margin-top: 56px;
    padding: 0 13px 0 12px;
  }

  .hide {
    display: flex;
    align-items: center;
    gap: 8px;
    padding-top: 5px;
  }

  .primary,
  .secondary {
    width: 86px;
    height: 24px;
    border: 1px solid #9b9b9b;
    border-radius: 4px;
    background: #333;
  }

  .primary {
    border-color: #fff;
  }

  .grip {
    position: absolute;
    right: 2px;
    bottom: 3px;
  }
</style>
